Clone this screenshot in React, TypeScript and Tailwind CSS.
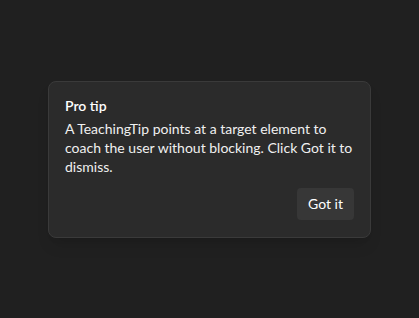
import React from 'react';

export default function App() {
  return (
    <div
      className="w-[419px] h-[318px] bg-[#202020] flex items-center justify-center"
      style={{ fontFamily: "'Segoe UI', Lato, 'Noto Sans', sans-serif" }}
    >
      <div className="w-[323px] rounded-lg border border-[#3a3a3a] bg-[#2b2b2b] px-4 pt-[14px] pb-[17px] shadow-lg text-white">
        <div className="text-[14px] leading-[20px] font-semibold">Pro tip</div>
        <p className="text-[14px] leading-[19px] text-[#f0f0f0] mt-[3px]">
          A TeachingTip points at a target element to coach the user without blocking. Click Got it to dismiss.
        </p>
        <div className="flex justify-end mt-[12px]">
          <button className="h-8 px-[11px] rounded bg-[#373737] text-[14px] text-white">Got it</button>
        </div>
      </div>
    </div>
  );
}
